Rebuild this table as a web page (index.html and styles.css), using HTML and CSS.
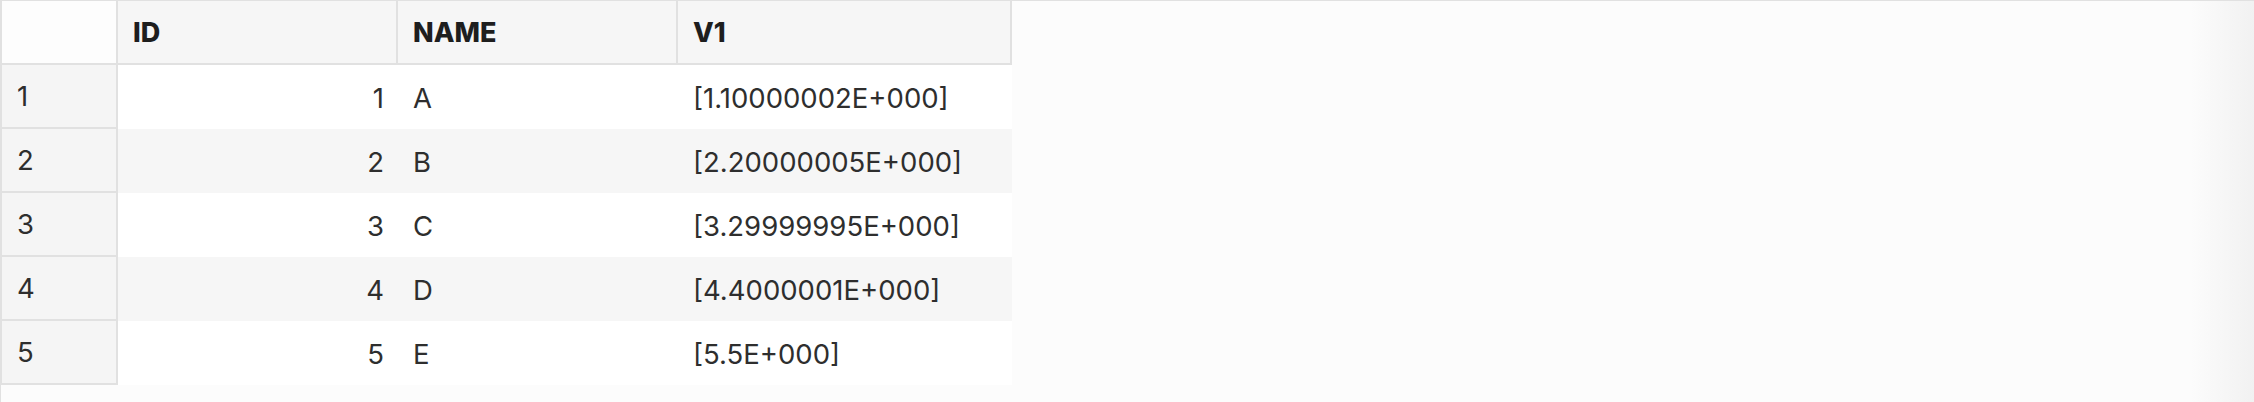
FILE: index.html
```html
<!DOCTYPE html>
<html>
<head>
<meta charset="utf-8">
<link rel="stylesheet" href="styles.css">
</head>
<body>
<div class="frame">
  <table class="grid">
    <thead>
      <tr>
        <th class="corner"></th>
        <th class="col col-id">ID</th>
        <th class="col col-name">NAME</th>
        <th class="col col-v1">V1</th>
      </tr>
    </thead>
    <tbody>
      <tr><th class="rowhead">1</th><td class="num">1</td><td>A</td><td>[1.10000002E+000]</td></tr>
      <tr class="alt"><th class="rowhead">2</th><td class="num">2</td><td>B</td><td>[2.20000005E+000]</td></tr>
      <tr><th class="rowhead">3</th><td class="num">3</td><td>C</td><td>[3.29999995E+000]</td></tr>
      <tr class="alt"><th class="rowhead">4</th><td class="num">4</td><td>D</td><td>[4.4000001E+000]</td></tr>
      <tr><th class="rowhead">5</th><td class="num">5</td><td>E</td><td>[5.5E+000]</td></tr>
    </tbody>
  </table>
</div>
</body>
</html>
```

FILE: styles.css
```css
html, body {
  margin: 0;
  padding: 0;
  background: #fcfcfc;
}

.frame {
  box-sizing: border-box;
  width: 2254px;
  height: 402px;
  border-top: 1px solid #e1e1e1;
  border-left: 1px solid #e1e1e1;
  background: linear-gradient(to right, #fcfcfc 0, #fcfcfc 2190px, #f1f1f1 2254px);
  font-family: Inter, "Noto Sans", sans-serif;
  font-size: 27.5px;
  color: #2e2e2e;
  overflow: hidden;
}

.grid {
  border-collapse: separate;
  border-spacing: 0;
  table-layout: fixed;
  width: 1011px;
}

.grid th,
.grid td {
  padding: 0 15px;
  text-align: left;
  white-space: nowrap;
  box-sizing: border-box;
}

.corner {
  width: 117px;
  height: 64px;
  background: #fdfdfd;
  border-left: 1px solid #e1e1e1;
  border-right: 2px solid #e1e1e1;
  border-bottom: 2px solid #e1e1e1;
}

.col {
  height: 64px;
  background: #f6f6f6;
  border-right: 2px solid #e1e1e1;
  border-bottom: 2px solid #e1e1e1;
  font-weight: 800;
  font-size: 27px;
  color: #1e1e1e;
  padding-top: 4px;
}

.col-id { width: 280px; }
.col-name { width: 280px; }
.col-v1 { width: 334px; }

.rowhead {
  height: 64px;
  background: #f5f5f5;
  border-left: 1px solid #e1e1e1;
  border-right: 2px solid #e1e1e1;
  border-bottom: 2px solid #e1e1e1;
  font-weight: 400;
  padding-top: 2px;
}

.grid td {
  height: 64px;
  background: #ffffff;
  padding-top: 2px;
}

.grid tr.alt td {
  background: #f6f6f6;
}

.grid td.num {
  text-align: right;
  padding-right: 14px;
}
```
